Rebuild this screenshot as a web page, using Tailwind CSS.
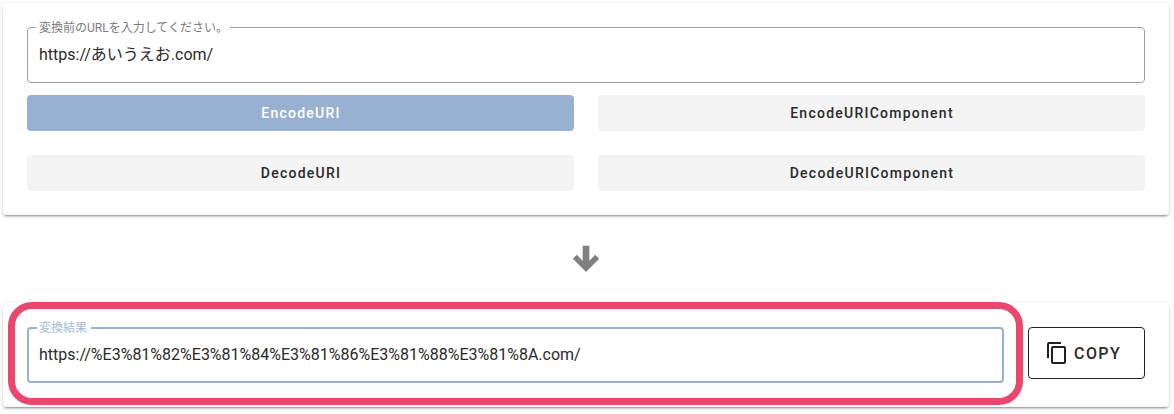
<!DOCTYPE html>
<html lang="ja">
<head>
<meta charset="utf-8">
<title>URL変換</title>
<script src="https://cdn.jsdelivr.net/npm/@tailwindcss/browser@4"></script>
</head>
<body class="h-[414px] overflow-hidden bg-white pt-[3px] pr-[5px] pl-[3px] font-['Roboto','Noto_Sans_CJK_JP',sans-serif] text-[#2a2a2a]">
  <section class="h-[212px] rounded bg-white p-6 shadow-[0_3px_1px_-2px_rgba(0,0,0,0.2),0_2px_2px_0_rgba(0,0,0,0.14),0_1px_5px_0_rgba(0,0,0,0.12)]">
    <div class="relative h-14 rounded border border-[#9e9e9e] px-[11px] pt-4">
      <span class="absolute -top-[9px] left-2 h-[18px] w-[194px] bg-white pl-[3px] text-xs leading-[18px] whitespace-nowrap text-[#7c7c7c]">変換前のURLを入力してください。</span>
      <p class="h-[22px] text-base leading-[22px] whitespace-nowrap">https://あいうえお.com/</p>
    </div>
    <div class="mt-3 grid grid-cols-2 gap-6 text-sm font-medium tracking-[1.25px]">
      <button class="h-9 rounded bg-[#99b1d0] pl-px text-white">EncodeURI</button>
      <button class="h-9 rounded bg-[#f4f4f4] pl-px">EncodeURIComponent</button>
      <button class="h-9 rounded bg-[#f4f4f4] pl-px">DecodeURI</button>
      <button class="h-9 rounded bg-[#f4f4f4] pl-px">DecodeURIComponent</button>
    </div>
  </section>
  <div class="flex h-[88px] items-center justify-center">
    <svg class="size-10" viewBox="0 0 24 24" fill="#808080"><path d="M10,4H14V13L17.5,9.5L19.92,11.92L12,19.84L4.08,11.92L6.5,9.5L10,13V4Z"/></svg>
  </div>
  <section class="relative flex h-[104px] items-start gap-6 rounded bg-white p-6 shadow-[0_3px_1px_-2px_rgba(0,0,0,0.2),0_2px_2px_0_rgba(0,0,0,0.14),0_1px_5px_0_rgba(0,0,0,0.12)]">
    <div class="relative h-14 flex-1 rounded border-2 border-[#99b1d0] px-[10px] pt-[15px]">
      <span class="absolute -top-[10px] left-2 h-[18px] w-[54px] bg-white pl-[2px] text-xs leading-[18px] whitespace-nowrap text-[#a5bad5]">変換結果</span>
      <p class="h-[22px] text-base leading-[22px] whitespace-nowrap">https://%E3%81%82%E3%81%84%E3%81%86%E3%81%88%E3%81%8A.com/</p>
    </div>
    <button class="flex h-[52px] w-[117px] items-center rounded border border-[#212121] pl-[15.5px] text-base font-medium tracking-[1.43px]">
      <svg class="mr-[5.5px] size-6" viewBox="0 0 24 24" fill="#212121"><path d="M19,21H8V7H19M19,5H8A2,2 0 0,0 6,7V21A2,2 0 0,0 8,23H19A2,2 0 0,0 21,21V7A2,2 0 0,0 19,5M16,1H4A2,2 0 0,0 2,3V17H4V3H16V1Z"/></svg><span class="pt-0.5">COPY</span>
    </button>
    <div class="pointer-events-none absolute -top-px left-[5px] h-[103px] w-[1015px] rounded-[24px] border-[7px] border-[#eb466e]"></div>
  </section>
</body>
</html>
